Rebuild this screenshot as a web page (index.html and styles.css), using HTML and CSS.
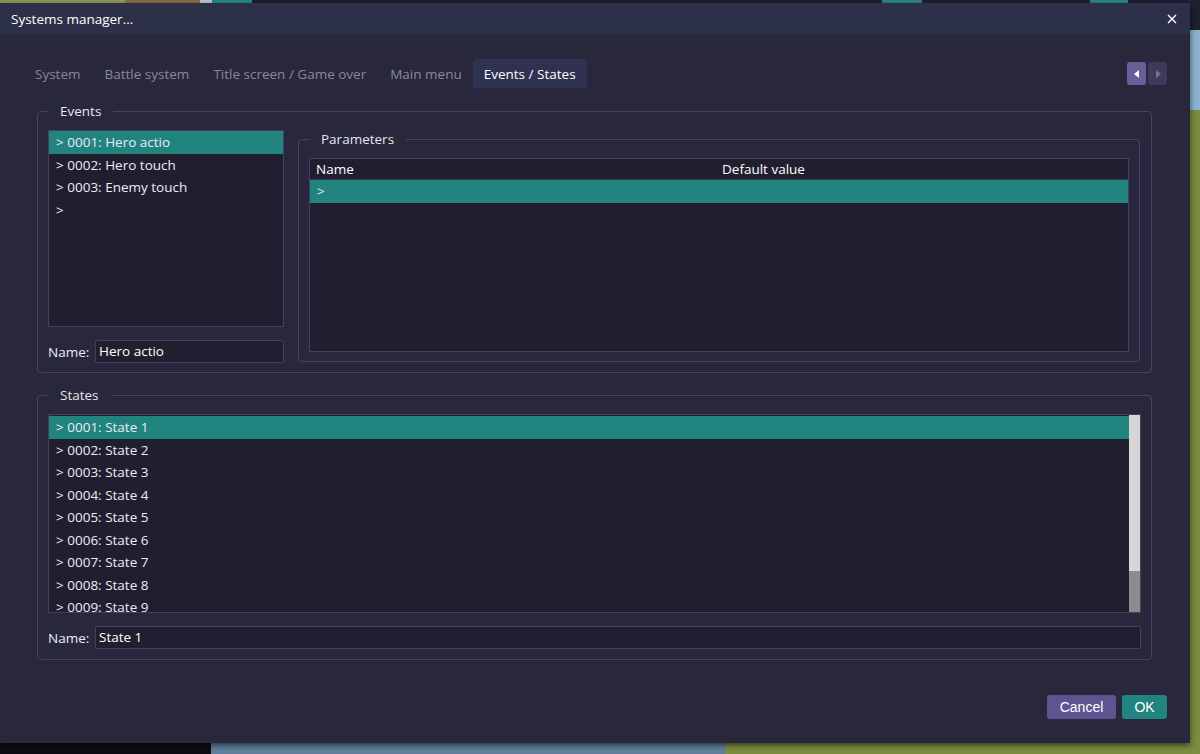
FILE: index.html
```html
<!DOCTYPE html>
<html>

<head>
	<meta charset="utf-8">
	<title>Systems manager...</title>
	<link rel="stylesheet" href="styles.css">
</head>

<body>
	<div class="dialog">
		<div class="titlebar">
			<span class="caption">Systems manager...</span>
			<span class="close">
				<svg width="10" height="10" viewBox="0 0 10 10"><path d="M1 1L9 9M9 1L1 9" stroke="#ffffff" stroke-width="1.4" /></svg>
			</span>
		</div>
		<div class="main">
			<div class="tabbar">
				<div class="tabs">
					<span class="tab">System</span>
					<span class="tab">Battle system</span>
					<span class="tab">Title screen / Game over</span>
					<span class="tab">Main menu</span>
					<span class="tab active">Events / States</span>
				</div>
				<div class="nav">
					<span class="nav-btn prev"><svg width="6" height="8" viewBox="0 0 6 8"><path d="M5 0V8L0 4Z" fill="#ffffff" /></svg></span>
					<span class="nav-btn next"><svg width="6" height="8" viewBox="0 0 6 8"><path d="M1 0V8L6 4Z" fill="#77748e" /></svg></span>
				</div>
			</div>

			<fieldset class="group events">
				<legend>Events</legend>
				<div class="events-row">
					<div class="events-left">
						<div class="list event-list">
							<div class="item selected">&gt; 0001: Hero actio</div>
							<div class="item">&gt; 0002: Hero touch</div>
							<div class="item">&gt; 0003: Enemy touch</div>
							<div class="item">&gt;</div>
						</div>
						<div class="name-row">
							<span class="label">Name:</span>
							<span class="field">Hero actio</span>
						</div>
					</div>
					<fieldset class="group params">
						<legend>Parameters</legend>
						<div class="table">
							<div class="thead">
								<span class="col-name">Name</span>
								<span class="col-value">Default value</span>
							</div>
							<div class="item selected">&gt;</div>
						</div>
					</fieldset>
				</div>
			</fieldset>

			<fieldset class="group states">
				<legend>States</legend>
				<div class="list state-list">
					<div class="rows">
						<div class="item selected">&gt; 0001: State 1</div>
						<div class="item">&gt; 0002: State 2</div>
						<div class="item">&gt; 0003: State 3</div>
						<div class="item">&gt; 0004: State 4</div>
						<div class="item">&gt; 0005: State 5</div>
						<div class="item">&gt; 0006: State 6</div>
						<div class="item">&gt; 0007: State 7</div>
						<div class="item">&gt; 0008: State 8</div>
						<div class="item">&gt; 0009: State 9</div>
					</div>
					<div class="scrollbar">
						<div class="track"></div>
						<div class="thumb"></div>
					</div>
				</div>
				<div class="name-row">
					<span class="label">Name:</span>
					<span class="field wide">State 1</span>
				</div>
			</fieldset>

			<div class="buttons">
				<span class="btn cancel">Cancel</span>
				<span class="btn ok">OK</span>
			</div>
		</div>
	</div>
</body>

</html>
```

FILE: styles.css
```css
* {
	margin: 0;
	padding: 0;
	box-sizing: border-box;
}
html,
body {
	height: 100%;
}
body {
	font-family: "Open Sans", "Noto Sans", sans-serif;
	font-size: 13.5px;
	color: #ececf4;
	overflow: hidden;
	background:
		linear-gradient(to right, #8e9e55 0 125px, #8b6f45 125px 200px, #c8c8c8 200px 212px, #2a8a80 212px 252px, #1e2030 252px 882px, #2a8a80 882px 922px, #1e2030 922px 1090px, #2a8a80 1090px 1128px, #1e2030 1128px) top / 100% 3px no-repeat,
		linear-gradient(to right, #0e0d14 0 211px, #5f7f9c 211px 725px, #7c8c40 725px) bottom / 100% 12px no-repeat,
		linear-gradient(to bottom, #1e2030 0 30px, #8db3cf 30px 110px, #7c8c40 110px) right / 12px 100% no-repeat,
		#1e2030;
}
.dialog {
	margin-top: 3px;
	width: 1190px;
	height: 740px;
	background-color: #29273c;
	box-shadow: 0 2px 6px rgba(0, 0, 0, 0.6);
}
.titlebar {
	height: 31px;
	background-color: #2d3049;
	display: flex;
	align-items: center;
	justify-content: space-between;
	padding: 0 13px 0 11px;
}
.caption {
	font-size: 13.5px;
	color: #ffffff;
}
.close {
	display: flex;
}
.main {
	padding: 25px 38px 0 37px;
}
.tabbar {
	display: flex;
	justify-content: space-between;
	align-items: center;
	margin: 0 -15px 0 -14px;
	height: 29px;
}
.tabs {
	display: flex;
	height: 29px;
}
.tab {
	display: flex;
	align-items: center;
	padding: 0 12px;
	color: #8a889b;
}
.tab.active {
	color: #ffffff;
	background-color: #2f3251;
	border-radius: 4px 4px 0 0;
	padding: 0 11px;
	margin-left: -1px;
}
.nav {
	display: flex;
	gap: 2px;
}
.nav-btn {
	width: 19px;
	height: 23px;
	border-radius: 3px;
	display: flex;
	align-items: center;
	justify-content: center;
}
.prev {
	background-color: #6a5d9a;
}
.next {
	background-color: #3d3a5c;
}
.group {
	border: 1px solid #47426b;
	border-radius: 4px;
}
.group legend {
	padding: 0 12px;
	line-height: 16px;
	color: #e6e6ee;
}
.events {
	margin-top: 15px;
	padding: 11px 11px 9px 10px;
}
.events-row {
	display: flex;
	gap: 14px;
	align-items: flex-start;
}
.events-left {
	width: 236px;
}
.list {
	background-color: #211f2f;
	border: 1px solid #433f63;
}
.event-list {
	height: 197px;
}
.item {
	height: 22.5px;
	line-height: 22.5px;
	padding-left: 7px;
	color: #ececf4;
	white-space: nowrap;
	overflow: hidden;
}
.item.selected {
	background-color: #22847f;
}
.name-row {
	display: flex;
	align-items: center;
	margin-top: 13px;
}
.label {
	width: 47px;
}
.field {
	flex: 1;
	height: 23px;
	line-height: 21px;
	padding-left: 3px;
	background-color: #211f2f;
	border: 1px solid #433f63;
	border-radius: 2px;
	color: #ffffff;
}
.params {
	flex: 1;
	margin-top: 1px;
	height: 231px;
	padding: 11px 10px 8px 10px;
}
.table {
	height: 194px;
	background-color: #211f2f;
	border: 1px solid #433f63;
}
.thead {
	display: flex;
	height: 21px;
	line-height: 21px;
	border-bottom: 1px solid #3a3657;
	color: #ffffff;
}
.col-name {
	width: 412px;
	padding-left: 6px;
}
.states {
	margin-top: 14px;
	padding: 11px 10px 10px 10px;
}
.state-list {
	height: 199px;
	display: flex;
	overflow: hidden;
}
.rows {
	flex: 1;
	padding-top: 1px;
}
.scrollbar {
	width: 11px;
	display: flex;
	flex-direction: column;
}
.track {
	height: 156px;
	background-color: #d6d6d6;
}
.thumb {
	flex: 1;
	background-color: #8c8c8c;
}
.buttons {
	display: flex;
	justify-content: flex-end;
	gap: 6px;
	margin: 35px -15px 0 0;
}
.btn {
	height: 24px;
	line-height: 24px;
	border-radius: 3px;
	text-align: center;
	color: #ffffff;
	font-family: "Liberation Sans", sans-serif;
	font-size: 14px;
}
.cancel {
	width: 69px;
	background-color: #5f5491;
}
.ok {
	width: 45px;
	background-color: #22847f;
}
```
